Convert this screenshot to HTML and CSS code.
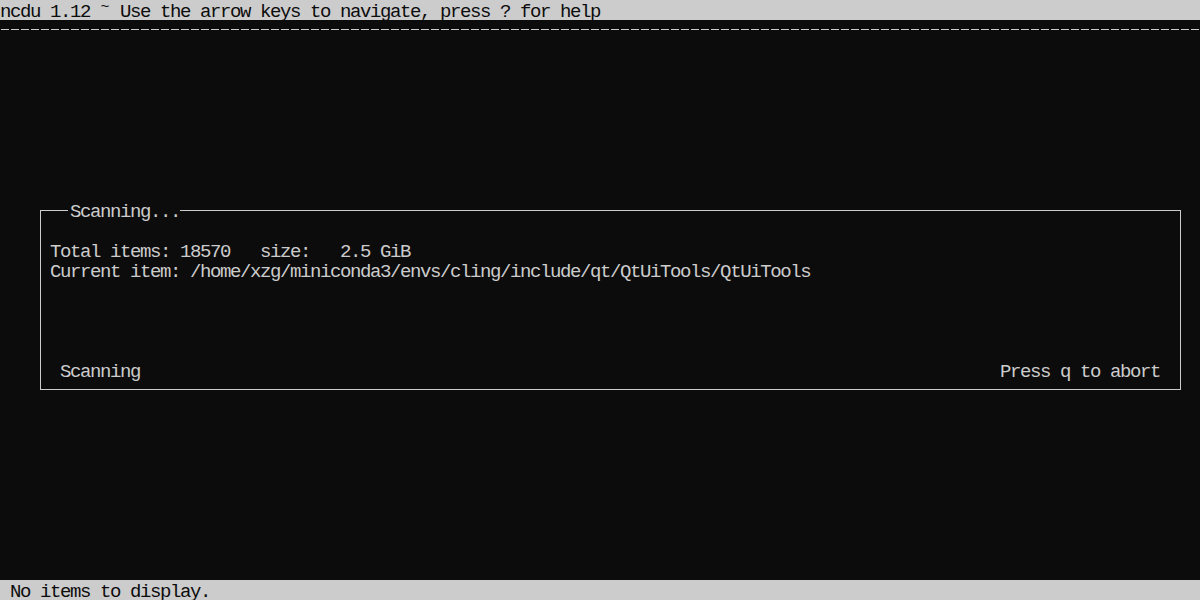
FILE: index.html
```html
<!DOCTYPE html>
<html lang="en">
<head>
<meta charset="utf-8">
<title>ncdu 1.12</title>
<link rel="stylesheet" href="styles.css">
</head>
<body>
<div class="screen">
  <div class="bar bar-top">ncdu 1.12 <span class="tilde">~</span> Use the arrow keys to navigate, press ? for help</div>
  <div class="rule" aria-hidden="true"></div>
  <main class="main">
    <section class="dialog">
      <h1 class="dialog-title">Scanning...</h1>
      <div class="line">Total items: 18570   size:   2.5 GiB</div>
      <div class="line">Current item: /home/xzg/miniconda3/envs/cling/include/qt/QtUiTools/QtUiTools</div>
      <div class="dialog-foot">
        <span>Scanning</span>
        <span>Press q to abort</span>
      </div>
    </section>
  </main>
  <div class="bar bar-bottom">No items to display.</div>
</div>
</body>
</html>
```
FILE: styles.css
```css
* { box-sizing: border-box; }

html, body {
  margin: 0;
  padding: 0;
  background: #0c0c0c;
}

.screen {
  width: 1200px;
  height: 600px;
  display: flex;
  flex-direction: column;
  background: #0c0c0c;
  color: #cccccc;
  font-family: "Liberation Mono", "DejaVu Sans Mono", monospace;
  font-size: 19px;
  letter-spacing: -1.4px;
  line-height: 16px;
  overflow: hidden;
}

.bar,
.line,
.dialog-title,
.dialog-foot span {
  white-space: pre;
}

.bar {
  height: 20px;
  padding-top: 4px;
  background: #cccccc;
  color: #0c0c0c;
  flex: none;
}

.bar-bottom {
  padding-left: 10px;
}

.tilde {
  display: inline-block;
  width: 10px;
  font-size: 15px;
  letter-spacing: 0;
  line-height: 8px;
  vertical-align: top;
  text-align: center;
}

.rule {
  height: 20px;
  flex: none;
  background: repeating-linear-gradient(to right, transparent 0 1px, #cccccc 1px 9px, transparent 9px 10px);
  background-size: 100% 1px;
  background-position: 0 9px;
  background-repeat: no-repeat;
}

.main {
  flex: 1;
  padding-top: 170px;
  padding-left: 40px;
}

.dialog {
  position: relative;
  width: 1141px;
  height: 180px;
  border: 1px solid #cccccc;
  padding: 29px 9px 9px 9px;
  display: flex;
  flex-direction: column;
}

.dialog-title {
  position: absolute;
  top: -11px;
  left: 27px;
  margin: 0;
  height: 20px;
  padding: 4px 0 0 2px;
  background: #0c0c0c;
  font: inherit;
  line-height: 16px;
  letter-spacing: inherit;
}

.line {
  height: 20px;
  padding-top: 4px;
}

.dialog-foot {
  margin-top: auto;
  height: 20px;
  padding: 4px 11px 0 10px;
  display: flex;
  justify-content: space-between;
}
```
